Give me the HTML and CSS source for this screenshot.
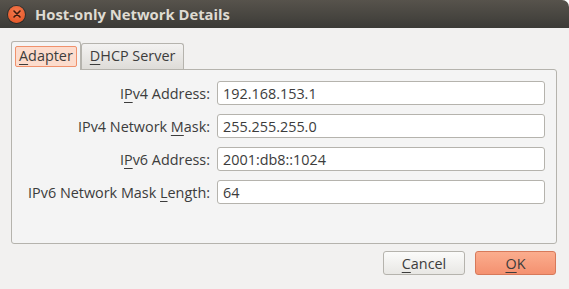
FILE: index.html
```html
<!DOCTYPE html>
<html lang="en">
<head>
    <meta charset="UTF-8">
    <title>Host-only Network Details</title>
    <link rel="stylesheet" href="styles.css">
</head>
<body>
    <div class="window">
        <div class="titlebar">
            <span class="close-btn">
                <svg width="10" height="10" viewBox="0 0 10 10"><path d="M2 2 L8 8 M8 2 L2 8" stroke="#3a1a0e" stroke-width="1.6" stroke-linecap="round"/></svg>
            </span>
            <span class="title">Host-only Network Details</span>
        </div>

        <div class="content">
            <div class="tabs">
                <div class="tab active"><span class="tab-label"><u>A</u>dapter</span></div>
                <div class="tab"><span class="tab-label"><u>D</u>HCP Server</span></div>
            </div>

            <div class="pane">
                <div class="form-row">
                    <label for="ipv4">I<u>P</u>v4 Address:</label>
                    <input type="text" id="ipv4" value="192.168.153.1">
                </div>
                <div class="form-row">
                    <label for="ipv4mask">IPv4 Network <u>M</u>ask:</label>
                    <input type="text" id="ipv4mask" value="255.255.255.0">
                </div>
                <div class="form-row">
                    <label for="ipv6">I<u>P</u>v6 Address:</label>
                    <input type="text" id="ipv6" value="2001:db8::1024">
                </div>
                <div class="form-row">
                    <label for="ipv6mask">IPv6 Network Mask <u>L</u>ength:</label>
                    <input type="text" id="ipv6mask" value="64">
                </div>
            </div>

            <div class="actions">
                <button class="btn"><u>C</u>ancel</button>
                <button class="btn primary"><u>O</u>K</button>
            </div>
        </div>
    </div>
</body>
</html>
```

FILE: styles.css
```css
body {
    margin: 0;
    font-family: 'Open Sans', 'DejaVu Sans', sans-serif;
    font-size: 14.4px;
    color: #3c3c3c;
    background-color: #fff;
}
u { text-decoration-thickness: 1px; text-underline-offset: 3px; }

.window {
    width: 569px;
    height: 289px;
    background-color: #f2f1f0;
    border-top-right-radius: 7px;
    overflow: hidden;
}

.titlebar {
    height: 28px;
    display: flex;
    align-items: center;
    background: linear-gradient(#57534c, #3c3b37);
}
.close-btn {
    width: 17px;
    height: 17px;
    margin-left: 8px;
    border-radius: 50%;
    background: radial-gradient(circle at 50% 35%, #f47a4f, #e2501f);
    display: flex;
    align-items: center;
    justify-content: center;
    box-shadow: 0 0 0 1px rgba(0, 0, 0, 0.35);
}
.title {
    margin-left: 10px;
    color: #dfdbd2;
    font-weight: bold;
    font-size: 14.8px;
}

.content { padding: 12px 12px 0 11px; }

.tabs { display: flex; align-items: flex-end; height: 29px; }
.tab {
    height: 25px;
    padding: 0 5px;
    display: flex;
    align-items: center;
    border: 1px solid #b5b3ad;
    border-bottom: none;
    border-radius: 3px 3px 0 0;
    background: linear-gradient(#f3f2f1, #dedcd8);
    color: #3c3c3c;
}
.tab.active {
    height: 28px;
    padding: 0 3px;
    background: #f4f4f4;
    margin-bottom: -1px;
    position: relative;
    z-index: 1;
}
.tab-label { padding: 0 3px 1px; line-height: 18px; }
.tab.active .tab-label {
    background-color: #fcdccd;
    border: 1px solid #f0916c;
    border-radius: 2px;
}

.pane {
    width: 544px;
    height: 162px;
    padding-top: 11px;
    border: 1px solid #b5b3ad;
    border-radius: 0 3px 3px 3px;
    background-color: #f4f4f4;
    display: flex;
    flex-direction: column;
    gap: 9px;
    box-sizing: content-box;
}
.form-row { display: flex; align-items: center; height: 24px; }
.form-row label {
    width: 198px;
    text-align: right;
    padding-right: 7px;
}
.form-row input {
    width: 328px;
    height: 24px;
    box-sizing: border-box;
    padding: 0 5px;
    border: 1px solid #b5b3ad;
    border-radius: 3px;
    background: #fff;
    font-family: inherit;
    font-size: 14.4px;
    color: #3c3c3c;
}

.actions {
    display: flex;
    justify-content: flex-end;
    gap: 10px;
    margin-top: 7px;
    padding-right: 1px;
}
.btn {
    width: 82px;
    height: 24px;
    border: 1px solid #b5b3ad;
    border-radius: 3px;
    background: linear-gradient(#fbfbfa, #e8e7e4);
    font-family: inherit;
    font-size: 14.4px;
    color: #3c3c3c;
}
.btn.primary {
    width: 81px;
    border-color: #d7795a;
    background: linear-gradient(#fbad8e, #f49170);
}
```
